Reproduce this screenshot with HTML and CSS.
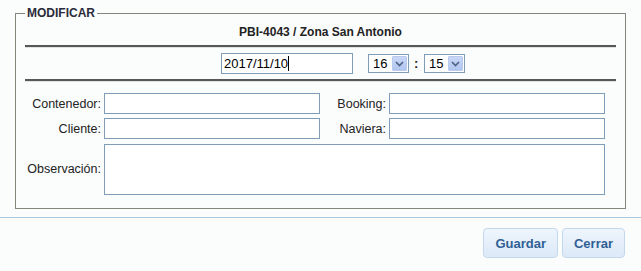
FILE: index.html
```html
<!DOCTYPE html>
<html lang="es">
<head>
    <meta charset="utf-8">
    <title>Modificar</title>
    <link rel="stylesheet" href="styles.css">
</head>
<body>
<fieldset class="box">
    <legend>MODIFICAR</legend>
    <div class="title">PBI-4043 / Zona San Antonio</div>
    <hr class="rule">
    <div class="when">
        <div class="date">2017/11/10<span class="caret"></span></div>
        <div class="pick">
            <span class="val">16</span>
            <span class="arrow"><svg width="9" height="6" viewBox="0 0 9 6"><path d="M1 1 L4.5 4.5 L8 1" fill="none" stroke="#4d6185" stroke-width="1.6"/></svg></span>
        </div>
        <span class="colon">:</span>
        <div class="pick">
            <span class="val">15</span>
            <span class="arrow"><svg width="9" height="6" viewBox="0 0 9 6"><path d="M1 1 L4.5 4.5 L8 1" fill="none" stroke="#4d6185" stroke-width="1.6"/></svg></span>
        </div>
    </div>
    <hr class="rule">
    <div class="form">
        <label>Contenedor:</label>
        <input type="text">
        <label>Booking:</label>
        <input type="text">
        <label>Cliente:</label>
        <input type="text">
        <label>Naviera:</label>
        <input type="text">
        <label>Observación:</label>
        <textarea></textarea>
    </div>
</fieldset>
<div class="footer">
    <button>Guardar</button>
    <button>Cerrar</button>
</div>
</body>
</html>
```

FILE: styles.css
```css
* {
    box-sizing: border-box;
    font-family: "Liberation Sans", Arial, sans-serif;
    font-size: 12.5px;
}

body {
    margin: 0;
    background-color: #fbfcfc;
    color: #1a1a1a;
}

.box {
    margin: 6px 15px 0 15px;
    width: 611px;
    height: 203px;
    padding: 0 9px;
    border: 1px solid #85857d;
}

.box legend {
    padding: 0 2px;
    font-weight: bold;
    font-size: 12px;
    line-height: 14px;
    color: #2b2b3a;
}

.title {
    padding-top: 4px;
    height: 25px;
    line-height: 16px;
    text-align: center;
    font-weight: bold;
    font-size: 12px;
    color: #222;
}

.rule {
    margin: 0;
    border: 0;
    border-top: 2px solid #575757;
    border-bottom: 1px solid #e2e2e2;
    height: 0;
}

.when {
    display: flex;
    align-items: center;
    height: 31px;
    padding-left: 196px;
}

.date {
    width: 132px;
    height: 21px;
    border: 1px solid #7f9db9;
    background: #fff;
    padding: 1px 2px;
    line-height: 17px;
    color: #000;
    font-size: 13px;
    display: flex;
    align-items: center;
}

.caret {
    display: inline-block;
    width: 1px;
    height: 15px;
    background: #000;
}

.pick {
    margin-left: 15px;
    width: 41px;
    height: 19px;
    border: 1px solid #7f9db9;
    background: #fff;
    display: flex;
    align-items: center;
    justify-content: space-between;
    padding: 1px;
}

.pick .val {
    padding-left: 3px;
    color: #000;
    font-size: 13px;
}

.arrow {
    width: 15px;
    height: 15px;
    background: linear-gradient(#c9d7f6, #b2c6f0);
    border: 1px solid #b9c9ef;
    border-radius: 1px;
    display: flex;
    align-items: center;
    justify-content: center;
}

.colon {
    margin-left: 5px;
    font-weight: bold;
    font-size: 13px;
    width: 6px;
}

.when .colon + .pick {
    margin-left: 4px;
}

.form {
    display: grid;
    grid-template-columns: 76px 216px 63px 216px;
    column-gap: 3px;
    row-gap: 4px;
    padding-top: 11px;
    align-items: center;
}

.form label {
    text-align: right;
    color: #222;
}

.form input {
    height: 21px;
    border: 1px solid #7f9db9;
    background: #fff;
    margin: 0;
}

.form textarea {
    grid-column: 2 / 5;
    height: 51px;
    border: 1px solid #7f9db9;
    background: #fff;
    margin: 1px 0 0 0;
    resize: none;
}

.footer {
    margin-top: 8px;
    border-top: 1px solid #a9c8dd;
    display: flex;
    justify-content: flex-end;
    gap: 4px;
    padding: 10px 16px 0 0;
}

.footer button {
    height: 30px;
    padding: 0 11px;
    border: 1px solid #c3d8ec;
    border-radius: 4px;
    background: linear-gradient(#eef5fd, #dde9f8);
    color: #2f5f95;
    font-weight: bold;
    font-size: 13px;
}
```
